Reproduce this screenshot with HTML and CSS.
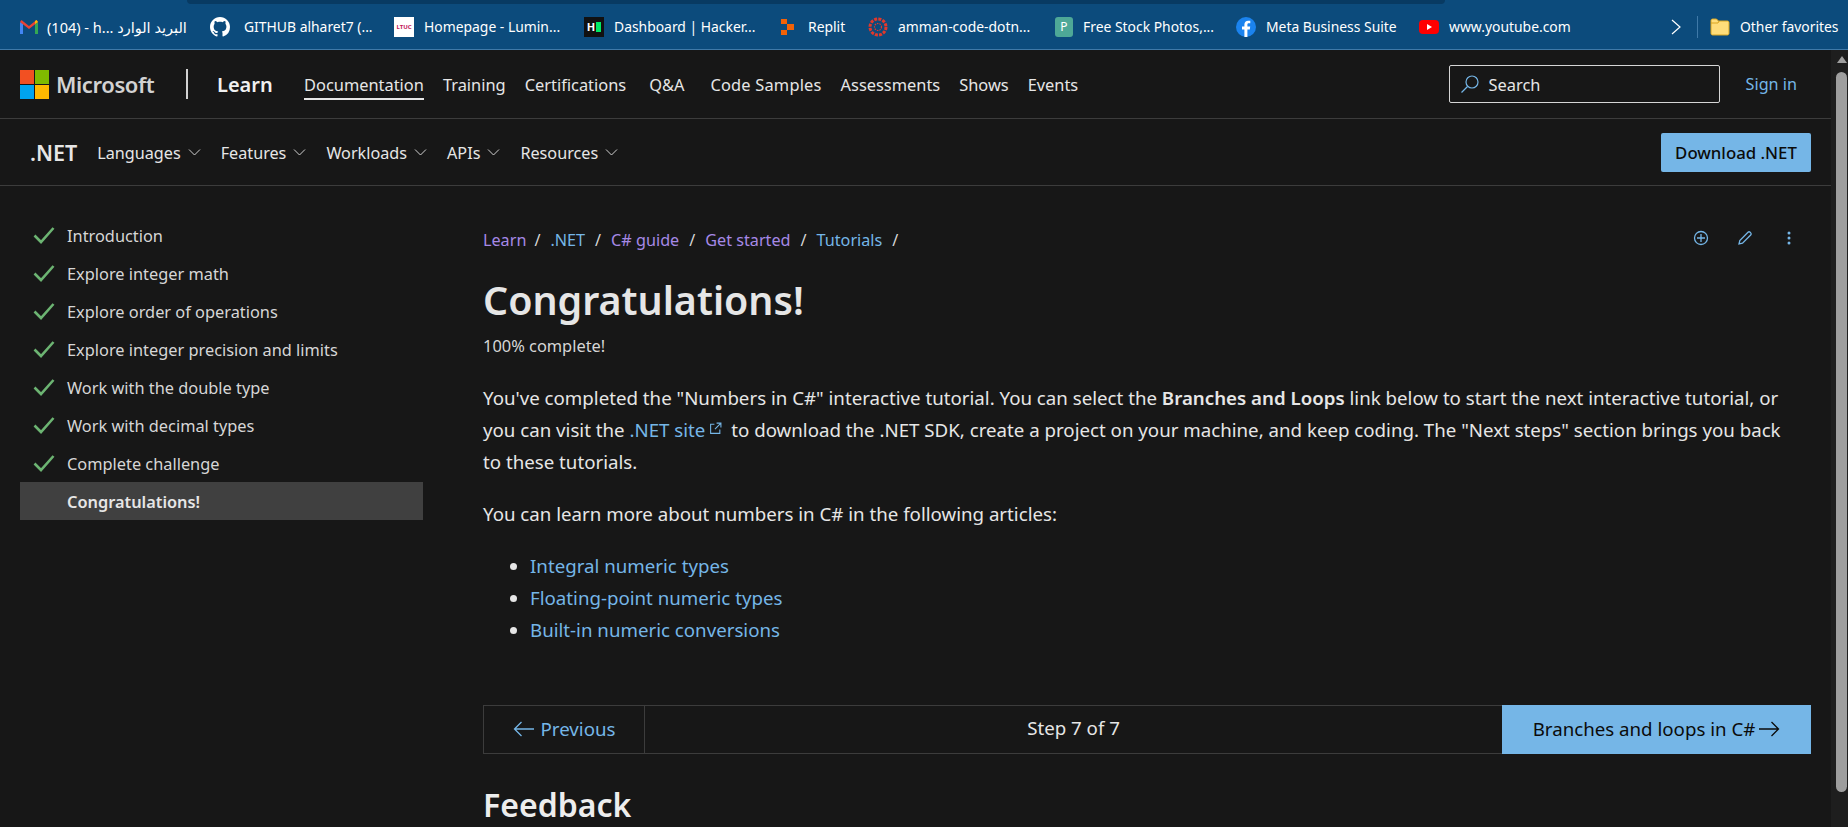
FILE: index.html
```html
<!DOCTYPE html>
<html lang="en">
<head>
<meta charset="UTF-8">
<title>Congratulations! - Numbers in C#</title>
<link rel="stylesheet" href="styles.css">
</head>
<body>

<div class="favbar">
  <div class="favstrip"></div>
  <div class="favrow">
    <a class="fav fav-gmail">
      <svg class="favicon" viewBox="0 0 20 16"><path d="M1 15V3l3 2v10z" fill="#4285f4"/><path d="M16 15V5l3-2v12z" fill="#34a853"/><path d="M1 3l9 7 9-7-1.500-2L10 7 2.500 1z" fill="#ea4335"/><path d="M16 5l3-2-1.500-2L16 2z" fill="#fbbc04"/></svg>
      <span>(104) - h... البريد الوارد</span>
    </a>
    <a class="fav fav-github">
      <svg class="favicon" viewBox="0 0 16 16"><path fill="#fff" d="M8 0C3.580 0 0 3.580 0 8c0 3.540 2.290 6.530 5.470 7.590.4.070.55-.17.55-.38 0-.19-.01-.82-.01-1.490-2.010.37-2.530-.49-2.690-.94-.09-.23-.48-.94-.82-1.130-.28-.15-.68-.52-.01-.53.63-.01 1.080.58 1.230.82.72 1.210 1.870.87 2.330.66.070-.52.28-.87.51-1.070-1.780-.2-3.640-.89-3.640-3.950 0-.87.31-1.590.82-2.150-.08-.2-.36-1.020.08-2.120 0 0 .67-.21 2.200.82.64-.18 1.320-.27 2-.27s1.360.09 2 .27c1.530-1.040 2.200-.82 2.200-.82.44 1.100.16 1.920.08 2.120.51.560.82 1.270.82 2.150 0 3.070-1.870 3.750-3.650 3.950.29.25.54.73.54 1.480 0 1.070-.01 1.930-.01 2.200 0 .21.15.46.55.38A8.010 8.010 0 0 0 16 8c0-4.420-3.580-8-8-8z"/></svg>
      <span>GITHUB alharet7 (...</span>
    </a>
    <a class="fav fav-luminus">
      <span class="favbox box-luminus">LTUC</span>
      <span>Homepage - Lumin...</span>
    </a>
    <a class="fav fav-hacker">
      <span class="favbox box-hacker">H<i></i></span>
      <span>Dashboard | Hacker...</span>
    </a>
    <a class="fav fav-replit">
      <svg class="favicon" viewBox="0 0 20 20"><path fill="#f26207" d="M3 2h6v5H3zM9 7h7v6H9zM3 13h6v5H3z"/></svg>
      <span>Replit</span>
    </a>
    <a class="fav fav-canvas">
      <svg class="favicon" viewBox="0 0 20 20"><circle cx="10" cy="10" r="8" fill="none" stroke="#e2382b" stroke-width="3" stroke-dasharray="3 1.200"/><circle cx="10" cy="10" r="3.500" fill="none" stroke="#e2382b" stroke-width="1.200" stroke-dasharray="1.500 1"/></svg>
      <span>amman-code-dotn...</span>
    </a>
    <a class="fav fav-pexels">
      <span class="favbox box-pexels">P</span>
      <span>Free Stock Photos,...</span>
    </a>
    <a class="fav fav-meta">
      <svg class="favicon" viewBox="0 0 20 20"><circle cx="10" cy="10" r="10" fill="#1b83ee"/><path fill="#fff" d="M8.400 20v-7.500H6V9.600h2.400V7.500c0-2.500 1.500-3.800 3.700-3.800 1 0 1.900.1 2.200.1v2.500h-1.500c-1.200 0-1.400.6-1.400 1.400v1.900h2.800l-.4 2.900h-2.400V20z"/></svg>
      <span>Meta Business Suite</span>
    </a>
    <a class="fav fav-youtube">
      <svg class="favicon" viewBox="0 0 20 14"><rect width="20" height="14" rx="4" fill="#f00"/><path d="M8 4l5 3-5 3z" fill="#fff"/></svg>
      <span>www.youtube.com</span>
    </a>
    <div class="fav-more">
      <svg width="10" height="16" viewBox="0 0 10 16"><path d="M1 1l8 7-8 7" fill="none" stroke="#fff" stroke-width="1.200"/></svg>
    </div>
    <div class="fav-sep"></div>
    <a class="fav fav-other">
      <svg class="favicon" viewBox="0 0 20 18"><path d="M1 2.500C1 1.700 1.700 1 2.500 1h4l2 2h9c.8 0 1.500.7 1.500 1.500v11c0 .8-.7 1.500-1.500 1.500h-15C1.700 17 1 16.300 1 15.500z" fill="#ffdd7a" stroke="#d9a520"/><path d="M1 5h7l1-2" fill="none" stroke="#d9a520"/></svg>
      <span>Other favorites</span>
    </a>
  </div>
</div>

<div class="window">
  <div class="page">

    <header class="topnav">
      <div class="ms-logo"><i class="red"></i><i class="green"></i><i class="blue"></i><i class="yellow"></i></div>
      <span class="ms-name">Microsoft</span>
      <span class="ms-divider"></span>
      <a class="learn">Learn</a>
      <nav class="topnav-links">
        <a class="active">Documentation</a>
        <a>Training</a>
        <a>Certifications</a>
        <a class="qa">Q&amp;A</a>
        <a class="samples">Code Samples</a>
        <a>Assessments</a>
        <a>Shows</a>
        <a>Events</a>
      </nav>
      <div class="search">
        <svg width="20" height="20" viewBox="0 0 20 20"><circle cx="12" cy="8" r="6" fill="none" stroke="#75b6e7" stroke-width="1.200"/><path d="M7.500 12.500L1.500 18.500" stroke="#75b6e7" stroke-width="1.200"/></svg>
        <span>Search</span>
      </div>
      <a class="signin">Sign in</a>
    </header>

    <div class="subnav">
      <a class="product">.NET</a>
      <a class="sub-link">Languages <svg class="chev" viewBox="0 0 12 7"><path d="M.5.500L6 6 11.500.5"/></svg></a>
      <a class="sub-link">Features <svg class="chev" viewBox="0 0 12 7"><path d="M.5.500L6 6 11.500.5"/></svg></a>
      <a class="sub-link">Workloads <svg class="chev" viewBox="0 0 12 7"><path d="M.5.500L6 6 11.500.5"/></svg></a>
      <a class="sub-link">APIs <svg class="chev" viewBox="0 0 12 7"><path d="M.5.500L6 6 11.500.5"/></svg></a>
      <a class="sub-link">Resources <svg class="chev" viewBox="0 0 12 7"><path d="M.5.500L6 6 11.500.5"/></svg></a>
      <a class="download">Download .NET</a>
    </div>

    <div class="layout">
      <ul class="steps">
        <li><svg class="check" viewBox="0 0 22 18"><path d="M1.500 9.500L8 16 20.500 2"/></svg>Introduction</li>
        <li><svg class="check" viewBox="0 0 22 18"><path d="M1.500 9.500L8 16 20.500 2"/></svg>Explore integer math</li>
        <li><svg class="check" viewBox="0 0 22 18"><path d="M1.500 9.500L8 16 20.500 2"/></svg>Explore order of operations</li>
        <li><svg class="check" viewBox="0 0 22 18"><path d="M1.500 9.500L8 16 20.500 2"/></svg>Explore integer precision and limits</li>
        <li><svg class="check" viewBox="0 0 22 18"><path d="M1.500 9.500L8 16 20.500 2"/></svg>Work with the double type</li>
        <li><svg class="check" viewBox="0 0 22 18"><path d="M1.500 9.500L8 16 20.500 2"/></svg>Work with decimal types</li>
        <li><svg class="check" viewBox="0 0 22 18"><path d="M1.500 9.500L8 16 20.500 2"/></svg>Complete challenge</li>
        <li class="current">Congratulations!</li>
      </ul>

      <main class="article">
        <div class="crumbs-row">
          <div class="crumbs">
            <a class="visited">Learn</a><span>/</span>
            <a>.NET</a><span>/</span>
            <a class="visited">C# guide</a><span>/</span>
            <a class="visited">Get started</a><span>/</span>
            <a>Tutorials</a><span>/</span>
          </div>
          <div class="actions">
            <svg viewBox="0 0 16 16"><circle cx="8" cy="8" r="6.500"/><path d="M8 4v8M4 8h8"/></svg>
            <svg viewBox="0 0 16 16"><path d="M2 14l.8-3.500L11 2.300c.6-.6 1.500-.6 2.100 0l.6.6c.6.6.6 1.500 0 2.100L5.500 13.200z"/></svg>
            <svg viewBox="0 0 16 16"><circle class="dot" cx="8" cy="3" r="1.500"/><circle class="dot" cx="8" cy="8" r="1.500"/><circle class="dot" cx="8" cy="13" r="1.500"/></svg>
          </div>
        </div>

        <h1>Congratulations!</h1>
        <p class="progress">100% complete!</p>

        <p class="para">You've completed the "Numbers in C#" interactive tutorial. You can select the <b>Branches and Loops</b> link below to start the next interactive tutorial, or you can visit the <a>.NET site<svg class="ext" viewBox="0 0 12 12"><path d="M5 2H1.500v8.500H10V7M7 1h4v4M11 1L5.500 6.500"/></svg></a> to download the .NET SDK, create a project on your machine, and keep coding. The "Next steps" section brings you back to these tutorials.</p>

        <p class="para more">You can learn more about numbers in C# in the following articles:</p>

        <ul class="articles">
          <li><a>Integral numeric types</a></li>
          <li><a>Floating-point numeric types</a></li>
          <li><a>Built-in numeric conversions</a></li>
        </ul>

        <div class="stepper">
          <a class="prev"><svg class="arrow" viewBox="0 0 22 16"><path d="M8.500 1L1.500 8l7 7M1.500 8H21"/></svg>Previous</a>
          <div class="step-count">Step 7 of 7</div>
          <a class="next">Branches and loops in C#<svg class="arrow" viewBox="0 0 22 16"><path d="M13.500 1l7 7-7 7M20.500 8H1"/></svg></a>
        </div>

        <h2>Feedback</h2>
      </main>
    </div>
  </div>

  <div class="scrollbar">
    <span class="scroll-up"></span>
    <span class="scroll-thumb"></span>
  </div>
</div>

</body>
</html>
```

FILE: styles.css
```css
* {
  box-sizing: border-box;
}

html,
body {
  height: 827px;
}

body {
  margin: 0;
  overflow: hidden;
  background-color: #171717;
  color: #e6e6e6;
  font-family: "Noto Sans", "DejaVu Sans", sans-serif;
  font-size: 15px;
  display: flex;
  flex-direction: column;
}

a {
  color: inherit;
  text-decoration: none;
}

/* favorites bar */
.favbar {
  height: 50px;
  background-color: #0c4b7c;
  border-bottom: 1px solid #3f79a8;
  flex-shrink: 0;
}

.favstrip {
  height: 4px;
  margin: 0 403px 0 187px;
  background-color: #083a62;
  border-radius: 0 0 10px 10px;
}

.favrow {
  height: 45px;
  padding-left: 19px;
  display: flex;
  align-items: center;
  color: #fff;
  font-size: 13.900px;
  white-space: nowrap;
}

.fav {
  display: flex;
  align-items: center;
  flex-shrink: 0;
  gap: 10px;
}

.favicon {
  width: 20px;
  height: 20px;
  flex-shrink: 0;
}

.favbox {
  width: 20px;
  height: 20px;
  flex-shrink: 0;
  display: flex;
  align-items: center;
  justify-content: center;
  overflow: hidden;
}

.box-luminus {
  background-color: #fff;
  color: #c2185b;
  font-size: 6px;
  font-weight: 700;
}

.box-hacker {
  background-color: #111;
  color: #fff;
  font-size: 11px;
  font-weight: 700;
  gap: 1px;
}

.box-hacker i {
  width: 5px;
  height: 10px;
  background-color: #00ea64;
}

.box-pexels {
  width: 18px;
  background-color: #4ea897;
  color: #fff;
  font-size: 12px;
  border-radius: 3px;
}

.fav-gmail { width: 191px; gap: 8px; }
.fav-gmail span { font-size: 14.500px; }
.fav-github { width: 184px; gap: 14px; }
.fav-luminus { width: 190px; }
.fav-hacker { width: 194px; }
.fav-replit { width: 90px; }
.fav-canvas { width: 187px; }
.fav-pexels { width: 181px; }
.fav-meta { width: 183px; }
.fav-youtube { width: 252px; }

.fav-more {
  width: 26px;
  display: flex;
  align-items: center;
}

.fav-sep {
  width: 1px;
  height: 22px;
  background-color: #3f79a8;
  margin-right: 12px;
}

/* page + scrollbar */
.window {
  flex: 1;
  min-height: 0;
  display: flex;
}

.page {
  flex: 1;
  min-width: 0;
}

.scrollbar {
  width: 17px;
  background-color: #1e1e1e;
  padding: 6px 1px 0 5px;
  display: flex;
  flex-direction: column;
  align-items: center;
}

.scroll-up {
  width: 0;
  height: 0;
  border-left: 5.500px solid transparent;
  border-right: 5.500px solid transparent;
  border-bottom: 7px solid #9e9e9e;
}

.scroll-thumb {
  width: 11px;
  height: 720px;
  margin-top: 9px;
  background-color: #9e9e9e;
  border-radius: 6px;
}

/* top header */
.topnav {
  height: 69px;
  padding: 0 34px 0 20px;
  border-bottom: 1px solid #3c3c3c;
  display: flex;
  align-items: center;
}

.ms-logo {
  width: 29px;
  height: 29px;
  display: grid;
  grid-template-columns: 1fr 1fr;
  gap: 1px;
}

.ms-logo .red { background-color: #f25022; }
.ms-logo .green { background-color: #7fba00; }
.ms-logo .blue { background-color: #00a4ef; }
.ms-logo .yellow { background-color: #ffb900; }

.ms-name {
  margin-left: 7px;
  width: 99px;
  font-size: 22px;
  font-weight: 600;
  color: #d2d2d2;
  letter-spacing: -0.4px;
}

.ms-divider {
  width: 2px;
  height: 30px;
  margin-left: 31px;
  background-color: #d2d2d2;
}

.learn {
  margin-left: 29px;
  width: 87px;
  font-size: 20px;
  font-weight: 600;
  color: #f0f0f0;
}

.topnav-links {
  display: flex;
  align-self: stretch;
  align-items: center;
  gap: 19px;
  flex: 1;
  padding-top: 2px;
}

.topnav-links a {
  font-size: 16.400px;
  padding: 2px 0;
  border-bottom: 2px solid transparent;
}

.topnav-links a.active {
  border-bottom-color: #e6e6e6;
}

.topnav-links a.qa {
  margin: 0 7px 0 4px;
}

.topnav-links a.samples {
  letter-spacing: 0.2px;
}

.search {
  width: 271px;
  height: 38px;
  padding-left: 10px;
  border: 1px solid #d6d6d6;
  border-radius: 2px;
  display: flex;
  align-items: center;
  gap: 9px;
  font-size: 16.400px;
}

.signin {
  margin-left: 26px;
  color: #75b6e7;
  font-size: 16.200px;
}

/* product nav */
.subnav {
  height: 67px;
  padding: 0 20px 0 30px;
  border-bottom: 1px solid #3c3c3c;
  display: flex;
  align-items: center;
  gap: 20px;
}

.product {
  font-size: 21.500px;
  font-weight: 600;
}

.sub-link {
  display: flex;
  align-items: center;
  gap: 7px;
  padding-top: 1px;
  font-size: 16.200px;
}

.chev {
  width: 13px;
  height: 7px;
  fill: none;
  stroke: #d0d0d0;
  stroke-width: 1;
}

.download {
  margin-left: auto;
  width: 150px;
  height: 39px;
  background-color: #75b6e7;
  color: #0b0b0b;
  border-radius: 2px;
  font-size: 16.800px;
  font-weight: 500;
  display: flex;
  align-items: center;
  justify-content: center;
}

/* sidebar */
.layout {
  padding: 0 20px;
  display: flex;
}

.steps {
  width: 403px;
  margin: 30px 60px 0 0;
  padding: 0;
  list-style: none;
  flex-shrink: 0;
  color: #d6d6d6;
}

.steps li {
  height: 38px;
  padding: 2px 0 0 47px;
  position: relative;
  display: flex;
  align-items: center;
  font-size: 16.350px;
}

.steps li.current {
  background-color: #404040;
  color: #e6e6e6;
  font-weight: 600;
}

.check {
  position: absolute;
  left: 13px;
  top: 10px;
  width: 22px;
  height: 18px;
  fill: none;
  stroke: #6cb472;
  stroke-width: 2.600;
}

/* article */
.article {
  flex: 1;
  min-width: 0;
  padding-top: 42px;
}

.crumbs-row {
  height: 24px;
  display: flex;
  align-items: center;
  justify-content: space-between;
}

.crumbs {
  display: flex;
  gap: 10px;
  font-size: 16.200px;
  color: #75b6e7;
}

.crumbs a:first-child {
  margin-right: -2px;
}

.crumbs span {
  color: #d6d6d6;
}

.crumbs .visited {
  color: #a689e6;
}

.actions {
  display: flex;
  gap: 28px;
  padding-right: 14px;
  margin-top: -5px;
}

.actions svg {
  width: 16px;
  height: 16px;
  fill: none;
  stroke: #75b6e7;
  stroke-width: 1.300;
}

.actions .dot {
  fill: #75b6e7;
  stroke: none;
}

h1 {
  margin: 22px 0 0;
  font-size: 39.400px;
  line-height: 52px;
  font-weight: 600;
  color: #e6e6e6;
}

.progress {
  margin: 8px 0 0;
  font-size: 16.400px;
  line-height: 24px;
  color: #d6d6d6;
}

.para {
  max-width: 1310px;
  margin: 24px 0 0;
  font-size: 18.700px;
  line-height: 32px;
}

.para a,
.articles a {
  color: #75b6e7;
}

.para b {
  font-weight: 600;
}

.ext {
  width: 13px;
  height: 13px;
  margin: 0 4px 0 4px;
  vertical-align: 2px;
  fill: none;
  stroke: #75b6e7;
  stroke-width: 1;
}

.para.more {
  margin-top: 20px;
}

.articles {
  margin: 20px 0 0;
  padding-left: 47px;
  font-size: 18.700px;
  line-height: 32px;
}

.stepper {
  height: 49px;
  margin-top: 59px;
  border: 1px solid #3c3c3c;
  border-right: 0;
  display: flex;
  align-items: stretch;
  font-size: 18.700px;
}

.prev {
  width: 161px;
  padding-bottom: 2px;
  border-right: 1px solid #3c3c3c;
  color: #75b6e7;
  display: flex;
  align-items: center;
  justify-content: center;
  gap: 6px;
}

.step-count {
  flex: 1;
  text-align: center;
  padding-top: 9px;
}

.next {
  width: 309px;
  margin: -1px 0;
  padding-bottom: 2px;
  background-color: #75b6e7;
  color: #0b0b0b;
  display: flex;
  align-items: center;
  justify-content: center;
  gap: 3px;
}

.arrow {
  width: 22px;
  height: 16px;
  fill: none;
  stroke: currentColor;
  stroke-width: 1.300;
}

h2 {
  margin: 30px 0 0;
  font-size: 32px;
  line-height: 42px;
  font-weight: 600;
  color: #ededed;
}
```
